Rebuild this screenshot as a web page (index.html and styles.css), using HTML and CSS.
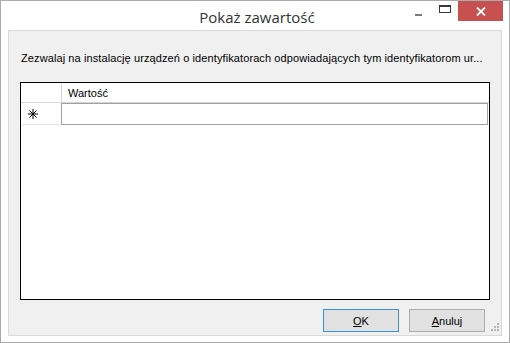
FILE: index.html
```html
<!DOCTYPE html>
<html lang="pl">
<head>
    <meta charset="UTF-8">
    <title>Pokaż zawartość</title>
    <link rel="stylesheet" href="styles.css">
</head>
<body>
    <div class="window">
        <div class="titlebar">
            <span class="title">Pokaż zawartość</span>
            <div class="controls">
                <span class="ctl minimize"><i></i></span>
                <span class="ctl maximize"><i></i></span>
                <span class="ctl close">
                    <svg width="10" height="9" viewBox="0 0 10 9"><path d="M1 0.5 L9 8.5 M9 0.5 L1 8.5" stroke="#fff" stroke-width="1.8"/></svg>
                </span>
            </div>
        </div>

        <div class="client">
            <p class="caption">Zezwalaj na instalację urządzeń o identyfikatorach odpowiadających tym identyfikatorom ur...</p>

            <div class="grid">
                <div class="grid-row header">
                    <div class="row-head"></div>
                    <div class="cell">Wartość</div>
                </div>
                <div class="grid-row new-row">
                    <div class="row-head">
                        <svg width="10" height="10" viewBox="0 0 10 10" stroke="#000" stroke-width="1">
                            <path d="M5 0 V10 M0 5 H10 M1.5 1.5 L8.5 8.5 M8.5 1.5 L1.5 8.5"/>
                        </svg>
                    </div>
                    <div class="cell"></div>
                </div>
            </div>

            <div class="buttons">
                <button class="btn default"><u>O</u>K</button>
                <button class="btn"><u>A</u>nuluj</button>
            </div>
            <div class="grip">
                <svg width="11" height="11" viewBox="0 0 11 11" fill="#b8b8b8">
                    <rect x="8" y="0" width="2" height="2"/>
                    <rect x="5" y="3" width="2" height="2"/><rect x="8" y="3" width="2" height="2"/>
                    <rect x="2" y="6" width="2" height="2"/><rect x="5" y="6" width="2" height="2"/><rect x="8" y="6" width="2" height="2"/>
                </svg>
            </div>
        </div>
    </div>
</body>
</html>
```

FILE: styles.css
```css
* {
    box-sizing: border-box;
}

body {
    margin: 0;
    background-color: #fff;
    font-family: "Liberation Sans", Arial, sans-serif;
}

.window {
    width: 510px;
    height: 343px;
    border: 1px solid #ababab;
    background-color: #fff;
    display: flex;
    flex-direction: column;
}

.titlebar {
    height: 29px;
    position: relative;
    display: flex;
    justify-content: center;
    align-items: center;
}

.title {
    font-family: "Open Sans", "Noto Sans", sans-serif;
    font-size: 15px;
    color: #333;
    padding-top: 2px;
    margin-left: 4px;
}

.controls {
    position: absolute;
    top: 0;
    right: 6px;
    display: flex;
    align-items: flex-start;
}

.ctl {
    display: flex;
    justify-content: center;
    align-items: center;
}

.minimize {
    width: 26px;
    height: 20px;
}

.minimize i {
    display: block;
    width: 7px;
    height: 2px;
    background-color: #7a7a7a;
    margin-top: 8px;
}

.maximize {
    width: 27px;
    height: 20px;
}

.maximize i {
    display: block;
    width: 12px;
    height: 8px;
    border: 1px solid #3a3a3a;
    border-top-width: 2px;
    margin-top: -4px;
}

.close {
    width: 45px;
    height: 20px;
    background-color: #c75050;
}

.client {
    flex: 1;
    margin: 0 7px 6px 7px;
    border: 1px solid #dadada;
    background-color: #f0f0f0;
    padding: 21px 12px 0 11px;
    position: relative;
}

.caption {
    margin: 0 0 17px 1px;
    font-size: 11px;
    letter-spacing: 0.1px;
    color: #000;
    white-space: nowrap;
    line-height: 13px;
}

.grid {
    width: 470px;
    height: 218px;
    border: 1px solid #000;
    background-color: #fff;
    font-size: 11px;
}

.grid-row {
    display: flex;
}

.header {
    height: 20px;
    border-bottom: 1px solid #d5d5d5;
}

.header .row-head {
    border-right: 1px solid #d5d5d5;
}

.header .cell {
    padding: 4px 0 0 6px;
    color: #000;
}

.row-head {
    width: 41px;
    flex-shrink: 0;
}

.cell {
    flex: 1;
}

.new-row {
    height: 22px;
}

.new-row .row-head {
    border-right: 1px solid #a0a0a0;
    border-bottom: 1px solid #e4e4e4;
    padding: 6px 0 0 7px;
    line-height: 0;
}

.new-row .cell {
    border: 1px solid #a0a0a0;
    border-left: none;
    margin-right: 1px;
}

.buttons {
    display: flex;
    justify-content: flex-end;
    gap: 10px;
    margin-top: 9px;
    padding-right: 4px;
}

.btn {
    width: 76px;
    height: 23px;
    border: 1px solid #adadad;
    background-color: #e1e1e1;
    font-family: "Liberation Sans", Arial, sans-serif;
    font-size: 11px;
    color: #000;
    padding: 0;
}

.btn.default {
    border-color: #3c90d0;
}

.grip {
    position: absolute;
    right: 1px;
    bottom: 1px;
    line-height: 0;
}
```
